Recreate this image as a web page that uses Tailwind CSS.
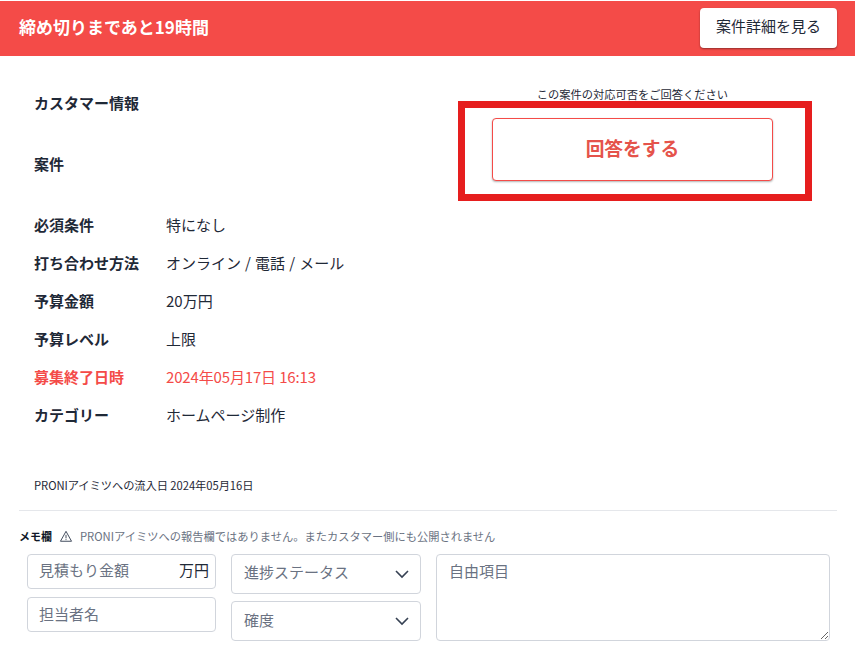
<!DOCTYPE html>
<html lang="ja">
<head>
    <meta charset="UTF-8">
    <meta name="viewport" content="width=device-width, initial-scale=1.0">
    <title>案件詳細</title>
    <script src="https://cdn.jsdelivr.net/npm/@tailwindcss/browser@4"></script>
</head>
<body class="relative h-[665px] w-[855px] overflow-hidden bg-white font-['Noto_Sans_CJK_JP',sans-serif] text-[#1f2937]">
    <!-- ヘッダー -->
    <header class="mt-px flex h-[55px] items-center justify-between bg-[#f44b48] pl-[19px] pr-[18px]">
        <h1 class="pb-1 text-[17px] leading-[24px] font-bold text-white">締め切りまであと19時間</h1>
        <button class="mb-[1px] h-[40px] w-[137px] rounded bg-white pb-[3px] text-[15px] text-[#1f2937] shadow-[0_1px_2px_rgba(0,0,0,0.4)]">案件詳細を見る</button>
    </header>

    <main class="flex h-[395px] justify-between pl-[34px] pr-[82px]">
        <div class="pt-[35px]">
            <h2 class="h-[61px] text-[15px] leading-[24px] font-bold">カスタマー情報</h2>
            <h2 class="h-[54px] text-[15px] leading-[24px] font-bold">案件</h2>
            <dl class="grid grid-cols-[132px_1fr] text-[15px] leading-[38px]">
                <dt class="font-bold">必須条件</dt>
                <dd>特になし</dd>
                <dt class="font-bold">打ち合わせ方法</dt>
                <dd class="[word-spacing:0.75px]">オンライン / 電話 / メール</dd>
                <dt class="font-bold">予算金額</dt>
                <dd>20万円</dd>
                <dt class="font-bold">予算レベル</dt>
                <dd>上限</dd>
                <dt class="font-bold text-[#f44b48]">募集終了日時</dt>
                <dd class="tracking-[-0.15px] text-[#f44b48]">2024年05月17日 16:13</dd>
                <dt class="font-bold">カテゴリー</dt>
                <dd>ホームページ制作</dd>
            </dl>
        </div>
        <div class="w-[281px] pt-[30px] text-center">
            <p class="h-[32px] text-[11.25px] leading-[16px]">この案件の対応可否をご回答ください</p>
            <button class="h-[63px] w-full rounded border border-[#f44b48] bg-white pb-[3px] text-[18.75px] font-bold text-[#e5534b] shadow-[0_1px_2px_rgba(0,0,0,0.3)]">回答をする</button>
        </div>
    </main>

    <p class="h-[28px] pl-[34px] pt-[26px] text-[11.25px] leading-[16px] tracking-[-0.06px]">PRONIアイミツへの流入日 2024年05月16日</p>

    <section class="ml-[19px] mr-[18px] mt-[31px] border-t border-gray-200 pt-[16px]">
        <div class="flex items-center text-[11.25px] leading-[18px]">
            <span class="text-[11px] font-bold text-gray-900">メモ欄</span>
            <svg class="ml-[7px] h-3.5 w-3.5 text-gray-700" viewBox="0 0 24 24" fill="none" stroke="currentColor" stroke-width="1.6"><path d="M12 4 2.5 21h19L12 4z"/><path d="M12 10v6M12 17.5v1.5"/></svg>
            <span class="ml-[7px] text-gray-500">PRONIアイミツへの報告欄ではありません。またカスタマー側にも公開されません</span>
        </div>
        <div class="mt-[9px] ml-2 flex gap-[15px]">
            <div class="flex w-[189px] flex-col gap-[8px]">
                <div class="flex h-[35px] items-center justify-between rounded border border-gray-300 pl-[11px] pr-[6px] text-[15px]">
                    <span class="pb-[2px] text-gray-500">見積もり金額</span>
                    <span class="pb-[2px]">万円</span>
                </div>
                <div class="flex h-[35px] items-center rounded border border-gray-300 px-[11px] text-[15px] text-gray-500">担当者名</div>
            </div>
            <div class="flex w-[190px] flex-col gap-[7px]">
                <div class="flex h-[40px] items-center justify-between rounded border border-gray-300 pl-3 pr-[10px] text-[15px] text-gray-500">
                    <span class="pb-[4px]">進捗ステータス</span>
                    <svg class="h-4 w-4 text-gray-700" viewBox="0 0 16 16" fill="none" stroke="currentColor" stroke-width="1.6"><path d="M2 5l6 6 6-6"/></svg>
                </div>
                <div class="flex h-[40px] items-center justify-between rounded border border-gray-300 pl-3 pr-[10px] text-[15px] text-gray-500">
                    <span class="pb-[2px]">確度</span>
                    <svg class="h-4 w-4 text-gray-700" viewBox="0 0 16 16" fill="none" stroke="currentColor" stroke-width="1.6"><path d="M2 5l6 6 6-6"/></svg>
                </div>
            </div>
            <textarea class="h-[87px] w-[394px] rounded border border-gray-300 px-3 py-[5px] text-[15px] placeholder:text-gray-500" placeholder="自由項目"></textarea>
        </div>
    </section>

    <!-- 赤枠の注釈 -->
    <div class="pointer-events-none absolute left-[458px] top-[101px] h-[100px] w-[354px] border-[7px] border-[#e61e1e]"></div>
</body>
</html>
